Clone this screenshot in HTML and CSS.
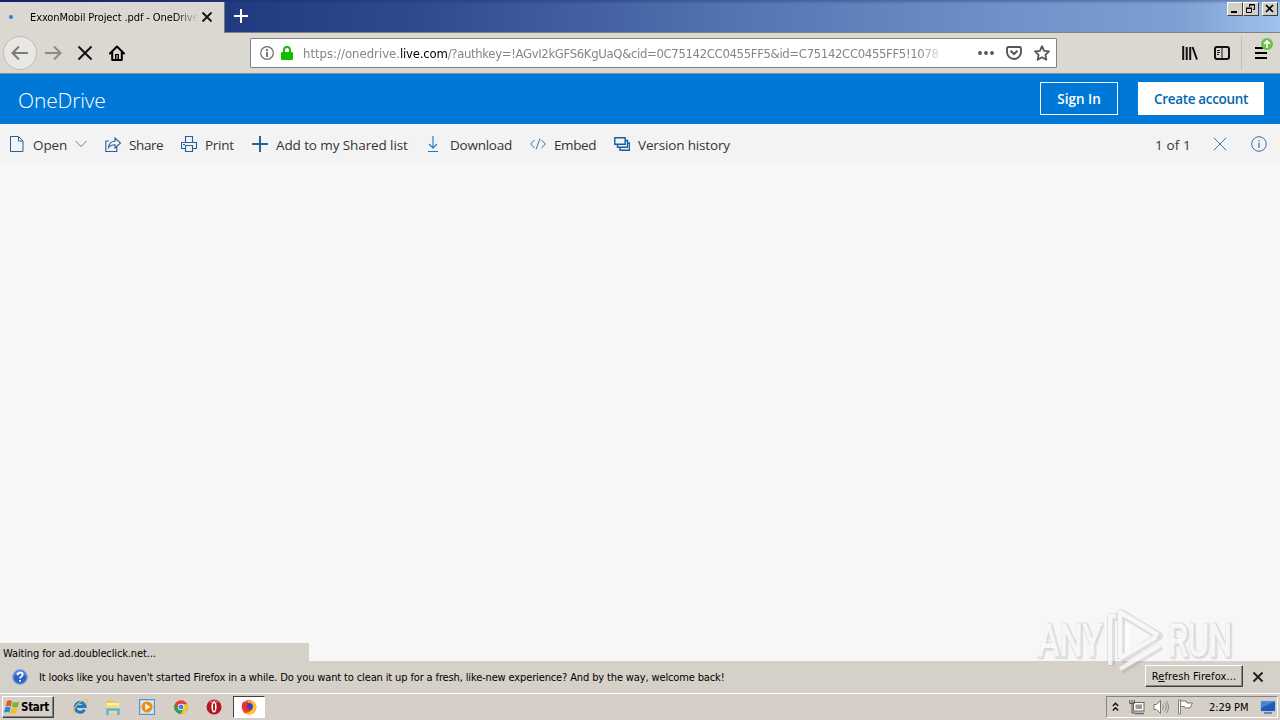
FILE: index.html
```html
<!DOCTYPE html>
<html lang="en">
<head>
<meta charset="utf-8">
<title>OneDrive</title>
<link rel="stylesheet" href="styles.css">
</head>
<body>
<div class="screen">
  <div class="tabstrip">
    <div class="tab">
      <span class="loading-dot"></span>
      <span class="tab-title"><span class="t-tab">ExxonMobil Project .pdf - OneDrive</span></span>
      <svg class="tab-close" width="12" height="12" viewBox="0 0 12 12"><path d="M1.500 1.500l9 9M10.500 1.500l-9 9" stroke="#111" stroke-width="1.8"/></svg>
    </div>
    <svg class="newtab" width="14" height="14" viewBox="0 0 14 14"><path d="M7 0v14M0 7h14" stroke="#fff" stroke-width="2"/></svg>
    <div class="winbtns">
      <span class="winbtn"><svg width="14" height="12" viewBox="0 0 14 12"><path d="M3 9h6" stroke="#000" stroke-width="2"/></svg></span>
      <span class="winbtn"><svg width="14" height="12" viewBox="0 0 14 12"><path d="M5.500 4V1.500h5v5H9M5 2h6M2.500 5.500h5v4h-5zM2 5h6" stroke="#000" fill="none"/></svg></span>
      <span class="winbtn last"><svg width="14" height="12" viewBox="0 0 14 12"><path d="M3 2l7 7M10 2l-7 7" stroke="#000" stroke-width="1.6"/></svg></span>
    </div>
  </div>

  <div class="navbar">
    <span class="back"><svg width="18" height="16" viewBox="0 0 18 16"><path d="M17 8H2M8 1.500L1.500 8 8 14.500" stroke="#7b7a78" stroke-width="2" fill="none"/></svg></span>
    <svg class="fwd" width="18" height="16" viewBox="0 0 18 16"><path d="M1 8h15M10 1.500L16.500 8 10 14.500" stroke="#8c8b89" stroke-width="2" fill="none"/></svg>
    <svg class="stop" width="16" height="16" viewBox="0 0 16 16"><path d="M1.500 1.500l13 13M14.500 1.500l-13 13" stroke="#111" stroke-width="2"/></svg>
    <svg class="home" width="16" height="16" viewBox="0 0 16 16"><path d="M1 8.500L8 1.500l7 7M3.200 7v8h9.600V7" fill="none" stroke="#000" stroke-width="2" stroke-linejoin="round" stroke-linecap="round"/><path d="M6 9h4v6H6z" fill="#000"/><path d="M8 10v4" stroke="#ddd"/></svg>
    <div class="urlbar">
      <svg width="14" height="14" viewBox="0 0 14 14"><circle cx="7" cy="7" r="6.300" fill="none" stroke="#6a6a6a" stroke-width="1.200"/><path d="M7 6v5M7 3v2" stroke="#6a6a6a" stroke-width="1.800"/></svg>
      <svg class="lock" width="12" height="14" viewBox="0 0 12 14"><path d="M3 7V4a3 3 0 0 1 6 0v3" fill="none" stroke="#12bc00" stroke-width="2"/><rect y="6" width="12" height="8" rx="1.200" fill="#12bc00"/></svg>
      <div class="url"><span class="u1">https://onedrive.</span><span class="u2">live.com</span><span class="u3">/?authkey=!AGvI2kGFS6KgUaQ&amp;cid=0C75142CC0455FF5&amp;id=C75142CC0455FF5!1078</span></div>
      <svg class="dots" width="16" height="4" viewBox="0 0 16 4"><circle cx="2" cy="2" r="1.900" fill="#555"/><circle cx="8" cy="2" r="1.900" fill="#555"/><circle cx="14" cy="2" r="1.900" fill="#555"/></svg>
      <svg class="pocket" width="16" height="14" viewBox="0 0 16 14"><path d="M2.500 1h11a1.500 1.500 0 0 1 1.500 1.500V6A7 7 0 0 1 1 6V2.500A1.500 1.500 0 0 1 2.500 1z" fill="none" stroke="#555" stroke-width="1.900"/><path d="M4.500 4.800L8 8.100l3.500-3.300" fill="none" stroke="#555" stroke-width="2"/></svg>
      <svg class="star" width="16" height="16" viewBox="0 0 16 16"><path d="M8 1.200l2.100 4.600 4.900.6-3.600 3.400.9 4.900L8 12.300l-4.300 2.400.9-4.900L1 6.400l4.900-.6z" fill="none" stroke="#555" stroke-width="1.800" stroke-linejoin="round"/></svg>
    </div>
    <svg class="library" width="16" height="14" viewBox="0 0 16 14"><path d="M1.200 0v14M4.700 1v13M8.200 1v13M10.500 1l4.500 12.500" stroke="#111" stroke-width="2"/></svg>
    <svg class="sidebar-icon" width="16" height="14" viewBox="0 0 16 14"><rect x="1" y="1" width="14" height="12" rx="2" fill="none" stroke="#111" stroke-width="2"/><path d="M8 1v12M3 4.500h3M3 6.500h3M3 8.500h2" stroke="#111" stroke-width="1"/></svg>
    <span class="nav-sep"></span>
    <div class="menu">
      <svg width="12" height="12" viewBox="0 0 12 12"><path d="M0 1h12M0 6h12M0 11h12" stroke="#000" stroke-width="2"/></svg>
      <svg class="update" width="12" height="12" viewBox="0 0 12 12"><circle cx="6" cy="6" r="6" fill="#6cc04a"/><path d="M6 10V3M3 6l3-3 3 3" stroke="#fff" stroke-width="1.600" fill="none"/></svg>
    </div>
  </div>

  <div class="header">
    <span class="brand">OneDrive</span>
    <span class="signin"><span class="t-signin">Sign In</span></span>
    <span class="create"><span class="t-create">Create account</span></span>
  </div>

  <div class="toolbar">
    <svg class="i-open" width="14" height="16" viewBox="0 0 14 16"><path d="M.5.500h8l4.500 4.500v10.500H.5zM8.500.500V5H13" fill="none" stroke="#2a6099"/></svg>
    <span class="label w-open">Open</span>
    <svg class="i-chev" width="12" height="8" viewBox="0 0 12 8"><path d="M.5 1L6 6.500 11.500 1" fill="none" stroke="#777"/></svg>
    <svg class="i-share" width="17" height="15" viewBox="0 0 17 15"><path d="M4 4H.8v10.500h11V10M3.500 10.500C4 6.500 6 4.200 10 4.200V1l5.500 5-5.500 5V7.800c-3 0-5 .8-6.500 2.700z" fill="none" stroke="#2a6099" stroke-width="1.100"/></svg>
    <span class="label w-share">Share</span>
    <svg class="i-print" width="16" height="16" viewBox="0 0 16 16"><path d="M4.500 6.500v-6h7v6M4.500 12.500H.500v-6h15v6h-4M4.500 9.500h7v6h-7zM2 8.500h2" fill="none" stroke="#2a6099" stroke-width="1.100"/></svg>
    <span class="label w-print">Print</span>
    <svg class="i-add" width="16" height="16" viewBox="0 0 16 16"><path d="M8 0v16M0 8h16" stroke="#2a6099" stroke-width="2"/></svg>
    <span class="label w-add">Add to my Shared list</span>
    <svg class="i-down" width="12" height="16" viewBox="0 0 12 16"><path d="M6 0v12M2 8l4 4 4-4M1 15.500h10" fill="none" stroke="#2376b7" stroke-width="1.100"/></svg>
    <span class="label w-down">Download</span>
    <svg class="i-embed" width="16" height="12" viewBox="0 0 16 12"><path d="M4.500 2L.7 6l3.800 4M11.500 2l3.800 4-3.800 4M10 .5L6 11.500" fill="none" stroke="#3976a8"/></svg>
    <span class="label w-embed">Embed</span>
    <svg class="i-ver" width="16" height="14" viewBox="0 0 16 14"><path d="M.8.800h10.400v6.400H.800zM3.500 7.500v2.700h10V3.500h-2M6 10.500v2.700h9.500V6h-2" fill="none" stroke="#155f9c" stroke-width="1.400"/></svg>
    <span class="label w-ver">Version history</span>
    <span class="label w-count">1 of 1</span>
    <svg class="i-close" width="14" height="14" viewBox="0 0 14 14"><path d="M.7.700l12.600 12.600M13.300.700L.700 13.300" stroke="#3976a8"/></svg>
    <svg class="i-info" width="16" height="16" viewBox="0 0 16 16"><circle cx="8" cy="8" r="7.300" fill="none" stroke="#2a76b5"/><path d="M8 6.500V12M8 4v1.300" stroke="#2a6099" stroke-width="1.100"/></svg>
  </div>

  <div class="page">
    <div class="status"><span class="t-status">Waiting for ad.doubleclick.net...</span></div>
    <svg class="watermark" width="206" height="70" viewBox="0 0 206 70">
      <g class="wm-shadow" fill="none"><text x="5" y="51" textLength="64" lengthAdjust="spacingAndGlyphs">ANY</text><text x="135" y="51" textLength="64" lengthAdjust="spacingAndGlyphs">RUN</text><path d="M77 60V11h6M87 53V7l38 23-38 24M87 64l40-24"/></g>
      <g class="wm-face" fill="none"><text x="4" y="50" textLength="64" lengthAdjust="spacingAndGlyphs">ANY</text><text x="134" y="50" textLength="64" lengthAdjust="spacingAndGlyphs">RUN</text><path d="M76 59V10h6M86 52V6l38 23M86 63l40-24M93 45V18M86 52l36-21"/></g>
    </svg>
  </div>

  <div class="notice">
    <svg class="help" width="16" height="16" viewBox="0 0 16 16"><circle cx="8" cy="8" r="7.300" fill="#2c62c8" stroke="#89a7da" stroke-width="1.300"/><path d="M2.500 6a5.800 5.800 0 0 1 11 0c-4-1.500-7-1.500-11 0z" fill="#789fe6"/><path d="M5.600 6.200c0-3.400 5-3.400 5-.5 0 1.700-2.500 1.700-2.500 3.800M8.100 11v1.800" fill="none" stroke="#fff" stroke-width="1.800"/></svg>
    <span class="notice-text">It looks like you haven't started Firefox in a while. Do you want to clean it up for a fresh, like-new experience? And by the way, welcome back!</span>
    <span class="refresh"><span class="t-refresh">R<u>e</u>fresh Firefox...</span></span>
    <svg class="notice-close" width="12" height="12" viewBox="0 0 12 12"><path d="M1.500 1.500l9 9M10.500 1.500l-9 9" stroke="#222" stroke-width="2"/></svg>
  </div>

  <div class="taskbar">
    <div class="start">
      <svg width="16" height="16" viewBox="0 0 16 16"><path d="M3 2q2.500-1.600 5 .2L6.800 7.500Q4.500 6 1.700 7.300z" fill="#e35b22"/><path d="M9 2.800q3 1.400 6.200-.3L14 7.700q-3.200 1.600-6.200.1z" fill="#78b82a"/><path d="M1.400 8.300q2.600-1.300 5.100.2L5.200 13.800Q3 12.400 0 13.500z" fill="#2d87d2"/><path d="M7.500 8.800q3 1.300 6.200 0l-1.300 5.200q-3.200 1.500-6.200 0z" fill="#f6bd25"/></svg>
      <span class="t-start">Start</span>
    </div>
    <svg class="q ie" width="18" height="18" viewBox="0 0 18 18"><path d="M13.500 11.800a5 5 0 1 1 .6-3.300H5" fill="none" stroke="#1c7cc8" stroke-width="3"/><path d="M3 15.800C-.500 13 9 1 15.500 1.500c2 .3 1.300 2.500.3 4" fill="none" stroke="#e8c04b" stroke-width="1.200"/></svg>
    <svg class="q folder" width="16" height="16" viewBox="0 0 16 16"><path d="M1 1h5l1 1.500h7V14H1z" fill="#e9c65e"/><path d="M2 4h12v4H2z" fill="#fff3b5"/><path d="M1 6h14v8H1z" fill="#f3dc83"/><path d="M2.500 16v-5.500h11V16" fill="none" stroke="#5ab2df" stroke-width="2.500"/></svg>
    <svg class="q media" width="16" height="16" viewBox="0 0 16 16"><rect x=".5" y=".5" width="15" height="15" fill="#b7d4ed" stroke="#5c93c5"/><rect x="2" y="2" width="12" height="12" fill="#d9eaf7"/><circle cx="8" cy="8" r="5.600" fill="#f28a18"/><path d="M6.300 4.700L11.500 8l-5.200 3.300z" fill="#fff"/></svg>
    <svg class="q chrome" width="14" height="14" viewBox="0 0 14 14"><circle cx="7" cy="7" r="6.800" fill="#e2412f"/><path d="M.8 4.200A6.800 6.800 0 0 0 6.800 13.800L9.800 8.600 4 8.600z" fill="#2ba24c"/><path d="M13.200 4.200H7L10 8.500 6.800 13.800A6.800 6.800 0 0 0 13.200 4.200z" fill="#fbc91b"/><circle cx="7" cy="7" r="3.200" fill="#fff"/><circle cx="7" cy="7" r="2.500" fill="#3f80ea"/></svg>
    <svg class="q opera" width="16" height="16" viewBox="0 0 16 16"><circle cx="8" cy="8" r="7.500" fill="#b41720"/><path d="M3 3a7.500 7.500 0 0 1 10 0q-5 3-10 0z" fill="#d85358"/><ellipse cx="8" cy="8" rx="2.600" ry="5.500" fill="#fff"/><path d="M8 4.500v7" stroke="#8e1119" stroke-width="1.800"/></svg>
    <div class="task-active"><svg width="16" height="16" viewBox="0 0 16 16"><circle cx="8" cy="8.300" r="7.300" fill="#f4511e"/><path d="M8 1c3 .2 7.500 3 7.300 7.500A7.200 7.200 0 0 1 4 14.200C12 14 12.500 7 8 1z" fill="#ffc32b"/><circle cx="8" cy="7.500" r="3.900" fill="#3c43b5"/><path d="M.8 7Q1 3.300 3 2q0 2 2.800 2.500L7.500 6 5 7.500q1 3.300 5 2.500-3 4-7 1.500z" fill="#f02b3c"/><path d="M7 4q-1-2 1-3.500Q8 2.500 11 4.500z" fill="#ff9824"/></svg></div>
    <div class="tray">
      <svg class="tchev" width="7" height="10" viewBox="0 0 7 10"><path d="M.8 4l2.700-2.700L6.200 4M.8 8.500l2.700-2.700 2.700 2.700" fill="none" stroke="#111" stroke-width="1.400"/></svg>
      <svg class="tnet" width="16" height="16" viewBox="0 0 16 16"><rect x="4.500" y="3.500" width="10.500" height="8.500" fill="#fff" stroke="#666"/><rect x="6.500" y="5.500" width="6.500" height="4.500" fill="#999"/><path d="M6 14.500h9" stroke="#666" stroke-width="1.500"/><path d="M.7 1v3.500h4.600V1M3 1v3.500M3 4.500V14h3" fill="none" stroke="#555"/></svg>
      <svg class="tsound" width="16" height="16" viewBox="0 0 16 16"><path d="M1 5.500h2.500L7.500 1.500v13l-4-4H1z" fill="#fff" stroke="#777"/><path d="M9.500 5.500q2 2.500 0 5M11.500 3.500q3.500 4.500 0 9M13.500 2q4 6 0 12" fill="none" stroke="#888"/></svg>
      <svg class="tflag" width="16" height="16" viewBox="0 0 16 16"><path d="M1.500 1h2v14h-2z" fill="#fff" stroke="#666" stroke-width=".8"/><path d="M3.500 2h5.500l1 2h5.500l-2.500 5H8.500l-1-1.500h-4z" fill="#fff" stroke="#777"/></svg>
      <span class="clock">2:29 PM</span>
      <svg class="tdesk" width="16" height="14" viewBox="0 0 16 14"><rect x=".5" y="1" width="15" height="10.500" fill="#1f5db5" stroke="#b9c8de"/><path d="M1 1.500h14L1 8z" fill="#4285d4"/><path d="M4 13h8" stroke="#4c6e9b" stroke-width="1.500"/></svg>
    </div>
  </div>
</div>
</body>
</html>
```
FILE: styles.css
```css
* { box-sizing: border-box; }
body { margin: 0; font-family: "DejaVu Sans Condensed", "DejaVu Sans", sans-serif; font-stretch: condensed; }
svg { display: block; flex: none; }
.screen { width: 1280px; height: 720px; display: flex; flex-direction: column; overflow: hidden; white-space: nowrap; background: #f7f7f7; }

.tabstrip { height: 33px; flex: none; display: flex; align-items: flex-start; background: linear-gradient(rgba(20,40,100,.35), rgba(40,70,140,0) 4px), linear-gradient(90deg, #0a246a 0, #213a7f 224px, #2f4b90 420px, #5676b4 760px, #6f91c8 1000px, #7d9fd2 1180px, #a0c3ec 1280px); border-bottom: 1px solid #85827c; }
.tab { width: 225px; height: 31px; margin-top: 2px; background: #dad8d1; border-right: 1px solid #777; display: flex; align-items: center; padding: 0 0 1px 9px; }
.loading-dot { width: 4px; height: 4px; border-radius: 2px; background: #2b7de0; margin-right: 17px; }
.tab-title { width: 168px; overflow: hidden; margin-top: -3px; -webkit-mask-image: linear-gradient(90deg, #000 146px, transparent 168px); mask-image: linear-gradient(90deg, #000 146px, transparent 168px); }
.t-tab { font-size: 11px; color: #000; letter-spacing: -.1px; }
.tab-close { margin: 0 0 1px 3px; }
.newtab { margin: 9px 0 0 9px; }
.winbtns { display: flex; margin: 2px 2px 0 auto; }
.winbtn { width: 16px; height: 14px; background: #d4d0c8; border: 1px solid; border-color: #fff #404040 #404040 #fff; }
.last { margin-left: 3px; }

.navbar { height: 41px; flex: none; display: flex; align-items: center; background: #dad8d1; border-bottom: 1px solid #8b8e91; }
.back { width: 34px; height: 34px; margin-left: 3px; border: 1px solid #bdbbb5; border-radius: 50%; background: #e9e7e3; display: flex; align-items: center; justify-content: center; }
.fwd { margin-left: 7px; }
.stop { margin-left: 15px; }
.home { margin-left: 16px; }
.urlbar { width: 807px; height: 30px; margin-left: 125px; background: #fff; border: 1px solid #7c8289; border-radius: 1px; display: flex; align-items: center; padding-left: 9px; }
.lock { margin-left: 7px; }
.url { width: 640px; margin-left: 10px; overflow: hidden; font-size: 13px; color: #858585; -webkit-mask-image: linear-gradient(90deg, #000 616px, transparent 642px); mask-image: linear-gradient(90deg, #000 616px, transparent 642px); }
.u2 { color: #000; letter-spacing: -.2px; }
.u3 { letter-spacing: -.35px; }
.dots { margin-left: 35px; }
.pocket { margin-left: 12px; }
.star { margin-left: 12px; }
.library { margin-left: 125px; }
.sidebar-icon { margin-left: 16px; }
.nav-sep { width: 1px; height: 34px; background: #c2bfb9; margin-left: 11px; }
.menu { position: relative; margin-left: 13px; }
.update { position: absolute; left: 6px; top: -9px; }

.header { height: 50px; flex: none; background: #0078d7; display: flex; align-items: center; padding: 0 16px 0 18px; font-family: "Open Sans", "Noto Sans", sans-serif; color: #fff; font-stretch: normal; }
.brand { font-size: 21px; font-weight: 300; letter-spacing: -.15px; margin-top: 2px; }
.signin, .create { height: 33px; margin-bottom: 1px; display: flex; align-items: center; justify-content: center; font-size: 13.500px; font-weight: 600; }
.signin { width: 78px; border: 1px solid #fff; margin-left: auto; }
.create { width: 126px; margin-left: 20px; background: #fff; color: #0067b0; letter-spacing: -.33px; }

.toolbar { height: 40px; flex: none; background: linear-gradient(#f3f3f3 36px, #f7f7f7); display: flex; align-items: center; padding-left: 10px; font-family: "Open Sans", "Noto Sans", sans-serif; font-size: 13.500px; letter-spacing: -.1px; font-stretch: normal; color: #333; }
.label { margin-top: 1px; flex: none; }
.w-open { width: 42px; margin-left: 9px; }
.i-share { margin-left: 18px; }
.w-share { width: 45px; margin-left: 7px; letter-spacing: -.4px; }
.i-print { margin-left: 7px; }
.w-print { width: 41px; margin-left: 8px; letter-spacing: -.3px; }
.i-add { margin-left: 6px; }
.w-add { width: 144px; margin-left: 8px; }
.i-down { margin-left: 7px; }
.w-down { width: 73px; margin-left: 11px; letter-spacing: -.25px; }
.i-embed { margin-left: 7px; }
.w-embed { width: 53px; margin-left: 8px; letter-spacing: -.4px; }
.i-ver { margin-left: 7px; }
.w-ver { margin-left: 8px; width: 94px; letter-spacing: -.15px; }
.w-count { margin-left: 423px; width: 47px; letter-spacing: .1px; }
.i-close { margin-left: 11px; }
.i-info { margin-left: 24px; }

.page { flex: 1; position: relative; background: #f7f7f7; display: flex; align-items: flex-end; }
.status { width: 309px; height: 18px; background: #d5d1c9; display: flex; align-items: center; padding: 2px 0 0 3px; }
.t-status, .notice-text, .t-refresh { font-size: 11px; color: #000; letter-spacing: -.135px; }
.watermark { position: absolute; left: 1034px; top: 442px; z-index: 2; font-family: Roboto, sans-serif; font-size: 45px; font-stretch: normal; }
.wm-shadow { stroke: rgba(120,120,120,.2); stroke-width: 8; stroke-linejoin: round; }
.wm-face { stroke: rgba(255,255,255,.75); stroke-width: 4.5; stroke-linejoin: round; }
.wm-shadow text { fill: rgba(120,120,120,.12); stroke-width: 5; }
.wm-face text { fill: rgba(255,255,255,.8); stroke-width: 1; }

.notice { height: 32px; flex: none; background: #d5d1c9; display: flex; align-items: center; padding-left: 12px; }
.notice-text { width: 700px; margin-left: 11px; }
.refresh { width: 98px; height: 22px; margin: 0 0 2px 406px; display: flex; align-items: center; justify-content: center; border: 1px solid; border-color: #fff #404040 #404040 #fff; box-shadow: inset -1px -1px #8a8780; }
.t-refresh { letter-spacing: .1px; }
.notice-close { margin-left: 9px; }

.taskbar { height: 27px; flex: none; background: #d5cfc8; border-top: 1px solid #fff; display: flex; align-items: center; padding-left: 2px; }
.start { width: 52px; height: 22px; border: 1px solid; border-color: #fff #404040 #404040 #fff; box-shadow: inset -1px -1px #85827c; display: flex; align-items: center; padding-left: 1px; }
.t-start { font-size: 11.500px; font-weight: bold; letter-spacing: -.3px; margin-left: 1px; }
.ie { margin-left: 17px; }
.folder { margin-left: 16px; }
.media { margin-left: 18px; }
.chrome { margin-left: 19px; }
.opera { margin-left: 18px; }
.task-active { width: 32px; height: 22px; margin-left: 11px; background: #fff; border: 1px solid; border-color: #404040 #fff #fff #404040; display: flex; align-items: center; justify-content: center; }
.tray { width: 172px; height: 22px; margin: 0 2px 0 auto; border: 1px solid; border-color: #858585 #fff #fff #858585; display: flex; align-items: center; padding-left: 5px; }
.tnet { margin-left: 10px; }
.tsound { margin-left: 8px; }
.tflag { margin-left: 8px; }
.clock { width: 41px; margin-left: 16px; font-size: 11px; letter-spacing: -.05px; }
.tdesk { margin-left: 10px; }
```
